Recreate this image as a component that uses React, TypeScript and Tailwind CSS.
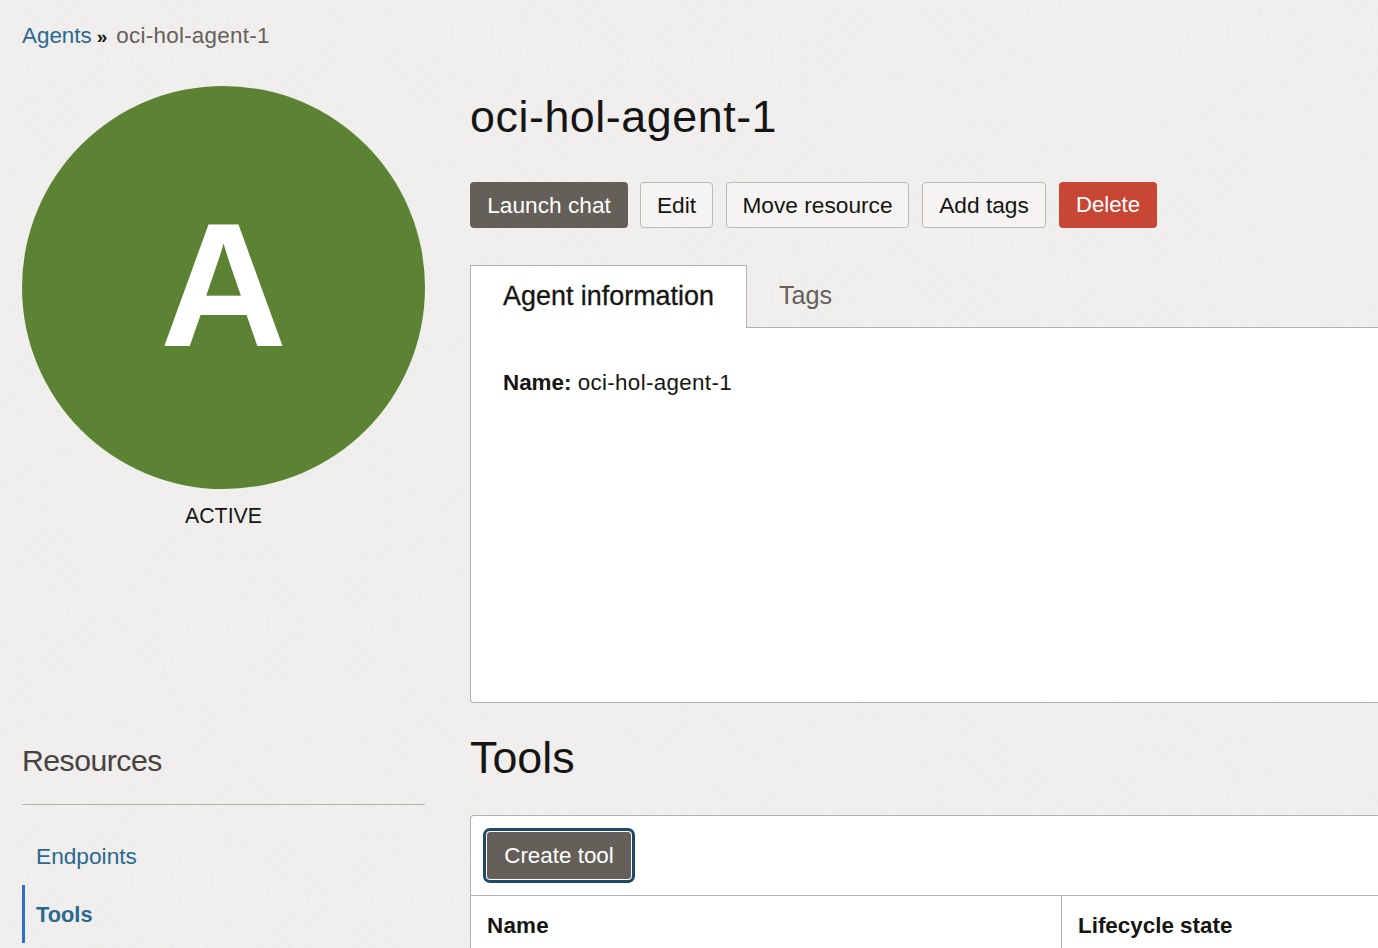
const centers: [number, number][] = [
  [1330, 30], [900, -20], [640, 60], [120, 60], [360, 30], [1120, 280], [890, 240], [640, 300],
  [60, 330], [440, 330], [1300, 420], [1050, 500], [110, 610], [320, 625], [560, 620], [820, 620], [1320, 860], [1080, 830], [860, 880], [600, 900], [330, 900], [70, 880],
];

function Rings() {
  return (
    <svg className="absolute inset-0 h-[948px] w-[1378px]" viewBox="0 0 1378 948" aria-hidden="true">
      {centers.map(([cx, cy], i) => (
        <g key={i} fill="none" stroke="#eeedeb" strokeWidth="2.5">
          <circle cx={cx} cy={cy} r={165} fill="#f0efed" stroke="none" />
          {Array.from({ length: 16 }, (_, k) => (
            <circle key={k} cx={cx} cy={cy} r={12 + k * 10} />
          ))}
        </g>
      ))}
    </svg>
  );
}

export default function App() {
  return (
    <div className="relative h-[948px] w-[1378px] overflow-hidden bg-[#f0efed] font-['Liberation_Sans',Arial,sans-serif] text-[22.4px] text-[#161513]">
      <Rings />
      <div className="relative pl-[22px] pt-[21px]">
        <nav className="flex h-[30px] items-center whitespace-nowrap leading-[30px]">
          <span className="text-[#2b6a8e]">Agents</span>
          <span className="ml-[5px] mr-[9px] text-[19px] font-bold leading-none text-[#161513]">»</span>
          <span className="tracking-[0.27px] text-[#665f5b]">oci-hol-agent-1</span>
        </nav>
        <div className="mt-[35px] flex gap-[45px]">
          <aside className="flex w-[403px] shrink-0 flex-col">
            <div className="flex h-[403px] w-[403px] items-center justify-center rounded-full bg-[#5c8333] pb-[5px]">
              <span className="text-[176px] font-bold leading-none text-white">A</span>
            </div>
            <div className="mt-[14px] text-center text-[21.3px] leading-[27px] text-[#161513]">ACTIVE</div>
            <h2 className="mt-[211px] text-[30.2px] font-normal leading-[40px] tracking-[-0.5px] text-[#45423f]">Resources</h2>
            <div className="mt-[23px] h-px bg-[#b5b2ae]"></div>
            <ul className="mt-[22px]">
              <li className="flex h-[58px] items-center pl-[14px] text-[22.7px] text-[#2b6a8e]">Endpoints</li>
              <li className="flex h-[58px] items-center border-l-[3px] border-[#2f6fca] pl-[11px] pt-[2px] text-[21.8px] font-bold text-[#2b6a8e]">Tools</li>
            </ul>
          </aside>
          <main className="w-[1000px] shrink-0">
            <h1 className="pb-[1px] text-[44.8px] font-normal leading-[61px] tracking-[0.55px] text-[#161513]">oci-hol-agent-1</h1>
            <div className="mt-[34px] flex gap-[13px] text-[22.7px]">
              <button className="flex h-[46px] w-[158px] items-center justify-center rounded-[4px] bg-[#645f59] text-white">Launch chat</button>
              <button className="-ml-[1px] flex h-[46px] w-[73px] items-center justify-center rounded-[4px] border border-[#bcb8b3] bg-[#f5f4f2]">Edit</button>
              <button className="flex h-[46px] w-[183px] items-center justify-center rounded-[4px] border border-[#bcb8b3] bg-[#f5f4f2]">Move resource</button>
              <button className="flex h-[46px] w-[124px] items-center justify-center rounded-[4px] border border-[#bcb8b3] bg-[#f5f4f2]">Add tags</button>
              <button className="flex h-[46px] w-[98px] items-center justify-center rounded-[4px] bg-[#c74634] text-[22.2px] text-white">Delete</button>
            </div>
            <div className="mt-[37px] flex h-[63px] border-b border-[#b5b2ae]">
              <div className="relative flex h-[63px] w-[277px] items-center justify-center border border-b-0 border-[#b5b2ae] bg-white pb-[2px] text-[26.9px] [-webkit-text-stroke:0.3px_#161513]">Agent information</div>
              <div className="flex h-[62px] items-center pl-[32px] text-[25.2px] text-[#665f5b]">Tags</div>
            </div>
            <section className="h-[375px] rounded-bl-[4px] border-b border-l border-[#b5b2ae] bg-white pl-[32px] pt-[40px] leading-[30px]">
              <b>Name:</b> <span className="tracking-[0.33px]">oci-hol-agent-1</span>
            </section>
            <h2 className="mt-[25px] text-[44.8px] font-normal leading-[58px] text-[#161513]">Tools</h2>
            <section className="mt-[29px] rounded-tl-[4px] border-l border-t border-[#b5b2ae] bg-white">
              <div className="flex h-[79px] items-center pl-[15px]">
                <button className="flex h-[49px] w-[146px] items-center justify-center rounded-[4px] border border-white bg-[#645f59] text-white outline-[3px] outline-[#1f4a63]">Create tool</button>
              </div>
              <div className="flex h-[60px] border-t border-[#b5b2ae] font-bold">
                <div className="flex w-[590px] items-center pl-[16px] tracking-[0.25px]">Name</div>
                <div className="flex flex-1 items-center border-l border-[#b5b2ae] pl-[16px]">Lifecycle state</div>
              </div>
            </section>
          </main>
        </div>
      </div>
    </div>
  );
}
